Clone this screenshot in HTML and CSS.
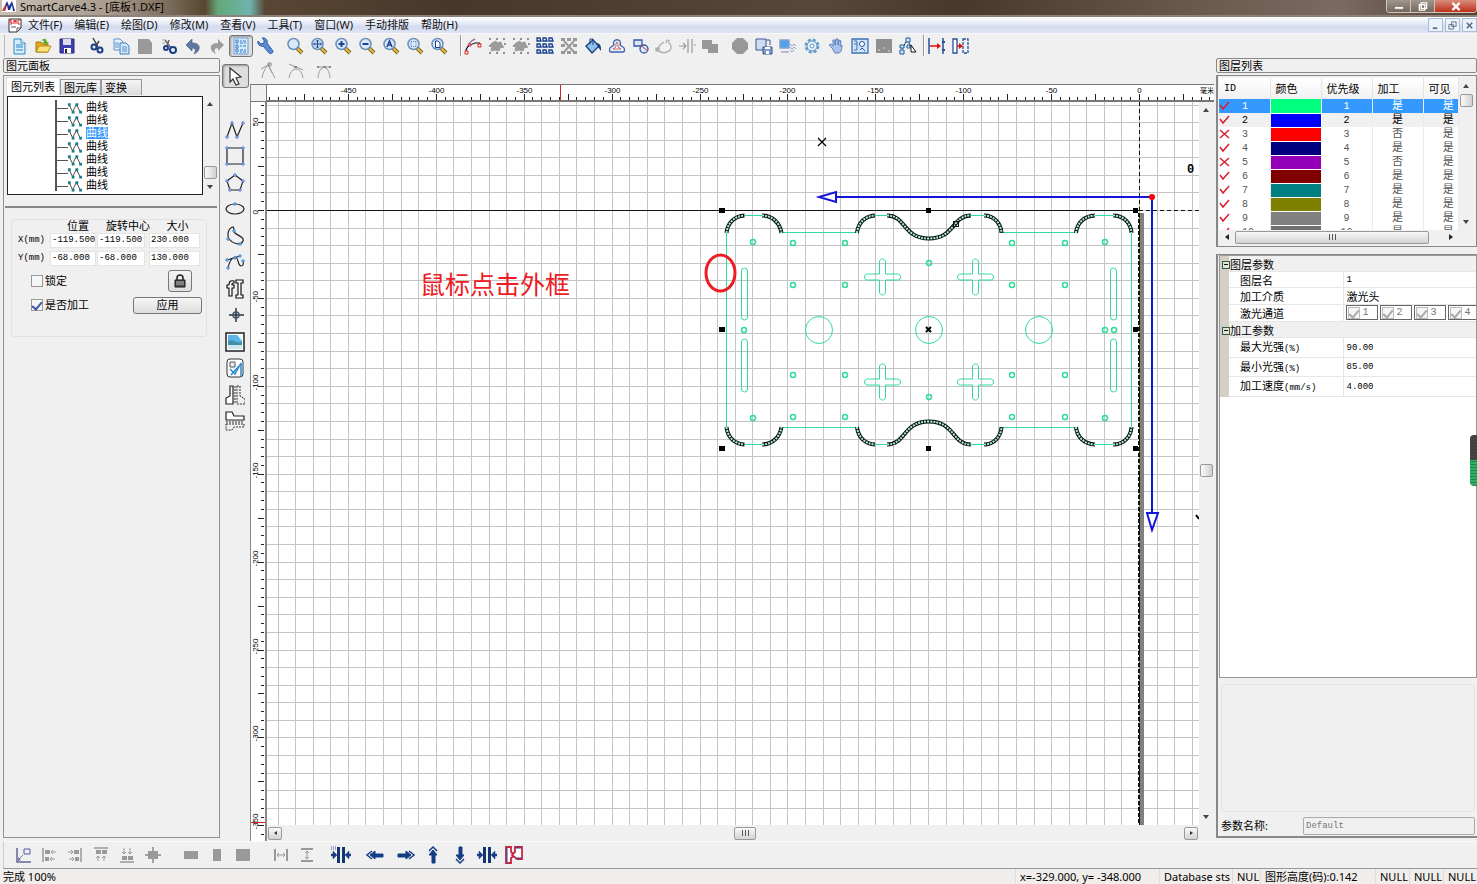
FILE: index.html
```html
<!DOCTYPE html>
<html lang="zh-CN">

<head>
    <meta charset="UTF-8">
    <meta name="viewport" content="width=device-width, initial-scale=1.0">
    <title>SmartCarve4.3 - [底板1.DXF]</title>
    <link rel="stylesheet" href="styles.css">
</head>

<body>
    <!-- Shared icon shapes -->
    <svg class="defs" width="0" height="0">
        <symbol id="lens" viewBox="0 0 18 18">
            <path d="M11 11l5 5" stroke="#7a6a2a" stroke-width="4" />
            <path d="M11 11l5 5" stroke="#e8b93c" stroke-width="2" />
            <circle cx="7.500" cy="7" r="5.500" fill="#d8e9f9" stroke="#6b8fb5" stroke-width="1.500" />
        </symbol>
        <symbol id="blob" viewBox="0 0 18 18">
            <path d="M4 6l4-2 1 2 4-1 1 3 2 2-4 1-1 3-4-1-4 1 1-4-3-1z" fill="#9b9b9b" stroke="#9b9b9b" />
            <path d="M1 1h2v2H1zM8 1h2v2H8zM15 1h2v2h-2zM1 15h2v2H1zM8 15h2v2H8zM15 15h2v2h-2zM1 8h1v2H1zM16 6h2v2h-2z" fill="#8f8f8f" />
        </symbol>
        <symbol id="poly" viewBox="0 0 16 12">
            <path d="M2 2l4 8 4-8 4 8" fill="none" stroke="#444" />
            <path d="M1 1h3v3H1zM5 9h3v3H5zM9 1h3v3H9zM13 9h3v3h-3z" fill="#1f7f86" />
        </symbol>
        <symbol id="squeeze" viewBox="0 0 20 18">
            <path d="M6 1h3v16H6zM11 1h3v16h-3z" fill="#14366f" />
            <path d="M0 8h2V5l4 4-4 4v-3H0zM20 8h-2V5l-4 4 4 4v-3h2z" fill="#1a3f88" stroke="#1a3f88" stroke-width=".5" />
        </symbol>
    </svg>

    <header class="titlebar">
        <svg class="logo" viewBox="0 0 14 12"><path d="M0 0h14v12H0z" fill="#fff" /><path d="M1 11L5 1l2 5 3-5 3 10h-2L10 5 8 10H6L5 5 3 11z" fill="#1d2f8f" /><path d="M0 11L4 3l-1 8z" fill="#d32" /></svg>
        <span class="caption">SmartCarve4.3 - [底板1.DXF]</span>
        <div class="winbtns">
            <button aria-label="最小化"><svg viewBox="0 0 12 10"><path d="M1 5h10v3H1z" fill="#fff" stroke="#444" stroke-width=".5" /></svg></button>
            <button aria-label="还原"><svg viewBox="0 0 12 10"><path d="M4 1h6v6H4zM2 3h6v6H2z" fill="#776a60" stroke="#fff" stroke-width="1.500" /></svg></button>
            <button class="close" aria-label="关闭"><svg viewBox="0 0 12 10"><path d="M2 1l8 8M10 1L2 9" stroke="#fff" stroke-width="2.500" /></svg></button>
        </div>
    </header>

    <nav class="menubar">
        <svg class="doc" viewBox="0 0 14 15"><path d="M1 1h12v9l-4 4H1z" fill="#fff" stroke="#333" /><path d="M4 2H2v2h2v2H2M6 6V2l1 2 1-2v4M12 2h-2v4h2" stroke="#d22" fill="none" /><path d="M3 9h5M9 14v-4h4" stroke="#555" fill="none" /></svg>
        <a href="#">文件(F)</a>
        <a href="#">编辑(E)</a>
        <a href="#">绘图(D)</a>
        <a href="#">修改(M)</a>
        <a href="#">查看(V)</a>
        <a href="#">工具(T)</a>
        <a href="#">窗口(W)</a>
        <a href="#">手动排版</a>
        <a href="#">帮助(H)</a>
        <div class="mdibtns">
            <button aria-label="最小化子窗口"><svg viewBox="0 0 10 10"><path d="M2 7h5v2H2z" fill="#5d6e82" /></svg></button>
            <button aria-label="还原子窗口"><svg viewBox="0 0 10 10"><path d="M4 1h5v5H4zM1 4h5v5H1z" fill="#e8f0fa" stroke="#5d6e82" /></svg></button>
            <button aria-label="关闭子窗口"><svg viewBox="0 0 10 10"><path d="M2 2l6 6M8 2L2 8" stroke="#5d6e82" stroke-width="1.800" /></svg></button>
        </div>
    </nav>

    <div class="toolbar">
        <div class="group first">
            <button aria-label="新建"><svg viewBox="0 0 18 18"><path d="M4 2h7l4 4v11H4z" fill="#d4ecfb" stroke="#2f8cc5" /><path d="M6 8h7M6 10h7M6 13h7" stroke="#2f8cc5" /><path d="M11 2v4h4" fill="#fff" stroke="#2f8cc5" /></svg></button>
            <button aria-label="打开"><svg viewBox="0 0 18 18"><path d="M2 15V5h5l1 2h6v8z" fill="#e9a91c" stroke="#a9790e" /><path d="M2 15l3-6h12l-3 6z" fill="#fbe37a" stroke="#b58a1c" /><path d="M7 4c3-4 6-2 6 1h2l-3 3-4-3h2c0-1-1-2-3-1z" fill="#5fae2e" /></svg></button>
            <button aria-label="保存"><svg viewBox="0 0 18 18"><path d="M2 2h14v14H2z" fill="#3e3fae" stroke="#26267c" /><path d="M5 2h8v6H5z" fill="#dde" /><path d="M6 11h7v5H6z" fill="#fff" /><path d="M7 12h2v4H7z" fill="#223" /></svg></button>
        </div>
        <div class="group">
            <button aria-label="剪切"><svg viewBox="0 0 18 18"><path d="M5 1l5 9M11 4L8 9" stroke="#444" stroke-width="1.500" /><circle cx="6" cy="10" r="2.500" fill="none" stroke="#1c3e86" stroke-width="2" /><circle cx="12" cy="13" r="2.500" fill="none" stroke="#1c3e86" stroke-width="2" /></svg></button>
            <button aria-label="复制"><svg viewBox="0 0 18 18"><path d="M2 2h6l3 3v8H2z" fill="#e7f2fc" stroke="#5b94c9" /><path d="M8 6h6l3 3v8H8z" fill="#d3e8fa" stroke="#3c7ebd" /><path d="M3 6h4M3 8h4M3 10h4M10 10h5M10 12h5M10 14h5" stroke="#5b94c9" /></svg></button>
            <button aria-label="粘贴" disabled><svg viewBox="0 0 18 18"><path d="M2 2h11l3 4v11H2z" fill="#999" /></svg></button>
            <button aria-label="裁剪"><svg viewBox="0 0 18 18"><path d="M5 3l6 8M9 3L7 9" stroke="#666" stroke-width="1.500" /><path d="M2 3h3M2 6h3" stroke="#aaa" /><circle cx="6" cy="11" r="2" fill="none" stroke="#1c3e86" stroke-width="2" /><circle cx="13" cy="13" r="3" fill="none" stroke="#1c3e86" stroke-width="2" /></svg></button>
            <button aria-label="撤销"><svg viewBox="0 0 18 18"><path d="M2 8l6-6v4c6 0 8 3 7 6-1 3-3 4-5 5 2-3 2-6-2-6v3z" fill="#5f789f" stroke="#4a628a" stroke-width=".7" /></svg></button>
            <button aria-label="重做"><svg viewBox="0 0 18 18"><path d="M16 8l-6-6v4C4 6 2 9 3 12c1 3 3 4 5 5-2-3-2-6 2-6v3z" fill="#9c9c9c" /></svg></button>
            <button class="on" aria-label="图元面板"><svg viewBox="0 0 18 18"><path d="M2 1h14v16H2z" fill="#d4e8fb" stroke="#6aa1d8" /><path d="M4 3h2v3H4zM4 8h2v3H4zM4 12h2v3H4z" fill="#fff" stroke="#3a79bf" /><path d="M8 4h2m1 0h3M8 6h3m1 0h2M8 9h2m1 0h3M8 13h3m1 0h2M8 15h2m1 0h3" stroke="#3a79bf" /></svg></button>
            <button aria-label="设置"><svg viewBox="0 0 18 18"><path d="M2 4l3 3 3-1V3L6 1c4-1 6 3 5 5l6 8c0 3-3 3-4 2L7 9C4 10 1 7 2 4z" fill="#5a8cd2" stroke="#2d62aa" /></svg></button>
        </div>
        <div class="group">
            <button aria-label="缩放"><svg viewBox="0 0 18 18"><use href="#lens" /></svg></button>
            <button aria-label="平移缩放"><svg viewBox="0 0 18 18"><use href="#lens" /><path d="M7.500 3v8M3.500 7h8" fill="none" stroke="#1d3f94" /><path d="M6 4.500L7.500 3 9 4.500M6 9.500L7.500 11 9 9.500M5 5.500L3.500 7 5 8.500M10 5.500L11.500 7 10 8.500" fill="none" stroke="#1d3f94" /></svg></button>
            <button aria-label="放大"><svg viewBox="0 0 18 18"><use href="#lens" /><path d="M7.500 4v6M4.500 7h6" stroke="#1d3f94" stroke-width="2" /></svg></button>
            <button aria-label="缩小"><svg viewBox="0 0 18 18"><use href="#lens" /><path d="M4.500 7h6" stroke="#1d3f94" stroke-width="2" /></svg></button>
            <button aria-label="全部显示"><svg viewBox="0 0 18 18"><use href="#lens" /><path d="M5 10l2.500-6L10 10M6 8h3" fill="none" stroke="#1d3f94" stroke-width="1.500" /></svg></button>
            <button aria-label="选择显示"><svg viewBox="0 0 18 18"><use href="#lens" /><path d="M5 4.500h5v5H5z" fill="none" stroke="#4d79c0" stroke-dasharray="1 1" /></svg></button>
            <button aria-label="页面显示"><svg viewBox="0 0 18 18"><use href="#lens" /><path d="M5.500 4H8l2 2v4.500H5.500z" fill="#fff" stroke="#1d3f94" /></svg></button>
        </div>
        <i class="sep"></i>
        <div class="group tight">
            <button aria-label="节点编辑"><svg viewBox="0 0 18 18"><path d="M2 15C3 8 6 4 11 2" fill="none" stroke="#97a" stroke-width="1.500" /><path d="M2 15v-3l4-4 5-2h5v3" fill="none" stroke="#111" /><path d="M1 14h3v3H1zM14 7h3v3h-3zM5 7h2v2H5z" fill="#fff" stroke="#d22" /></svg></button>
            <button aria-label="组合" disabled><svg viewBox="0 0 18 18"><use href="#blob" /></svg></button>
            <button aria-label="取消组合" disabled><svg viewBox="0 0 18 18"><use href="#blob" /></svg></button>
            <button aria-label="阵列"><svg viewBox="0 0 18 18"><path d="M1 1h3l1 3H1zM7 1h3l1 3H7zM13 1h3l1 3h-4zM1 7h3l1 3H1zM7 7h3l1 3H7zM13 7h3l1 3h-4zM1 13h3l1 3H1zM7 13h3l1 3H7zM13 13h3l1 3h-4z" fill="#dcebfb" stroke="#173f8a" stroke-width="1.300" /></svg></button>
            <button aria-label="取消阵列" disabled><svg viewBox="0 0 18 18"><path d="M1 1h4v3H1zM7 1h4v3H7zM13 1h4v3h-4zM1 7h4v3H1zM13 7h4v3h-4zM1 14h4v3H1zM7 14h4v3H7zM13 14h4v3h-4z" fill="#989898" /><path d="M4 4l10 11M14 4L4 15" stroke="#989898" stroke-width="2" /></svg></button>
            <button aria-label="填充"><svg viewBox="0 0 18 18"><path d="M2 9l7-6 6 6-7 7z" fill="#8fc1ea" stroke="#17407e" stroke-width="1.300" /><path d="M6 7V2h3v6" fill="none" stroke="#17407e" /><path d="M12 6c5 0 5 4 5 8l-3-4z" fill="#17407e" /></svg></button>
            <button aria-label="印章"><svg viewBox="0 0 18 18"><path d="M6 8c-3-7 9-7 6 0l3 2c2 1 2 5 0 5H3c-2 0-2-4 0-5z" fill="#e8effa" stroke="#4262a6" stroke-width="1.300" /><path d="M5 12l3-2V7l1-2 1 2v3l3 2z" fill="#fff" stroke="#b44" stroke-width=".8" /></svg></button>
        </div>
        <div class="group narrow">
            <button aria-label="相交"><svg viewBox="0 0 18 18"><path d="M2 3h8v6H2z" fill="#dbe7f9" stroke="#3159a5" stroke-width="1.300" /><circle cx="12" cy="12" r="4" fill="#dce8fa" stroke="#3159a5" stroke-width="1.300" /><path d="M8 8l8 6" stroke="#b44" /></svg></button>
            <button aria-label="平滑" disabled><svg viewBox="0 0 18 18"><path d="M9 5L5 8l-3 5c6 5 15 2 14-4 0-2-2-3-3-4M1 11h3v3H1zM11 6l1-3 3 1" fill="none" stroke="#aaa" stroke-width="1.200" /></svg></button>
            <button aria-label="对齐" disabled><svg viewBox="0 0 18 18"><path d="M10 2v14M14 2v14M1 9h7M5 6l3 3-3 3M16 8h2" fill="none" stroke="#999" stroke-width="1.200" /></svg></button>
        </div>
        <div class="group tight">
            <button aria-label="合并" disabled><svg viewBox="0 0 18 18"><path d="M1 3h10v4h6v9H7v-4H1z" fill="#989898" /></svg></button>
        </div>
        <div class="group">
            <button aria-label="停止" disabled><svg viewBox="0 0 18 18"><path d="M6 1h6l5 5v6l-5 5H6l-5-5V6z" fill="#989898" /></svg></button>
            <button aria-label="输出"><svg viewBox="0 0 18 18"><path d="M1 2h10v11H1z" fill="#cfddf2" stroke="#3b568f" /><path d="M11 3h4v5" fill="none" stroke="#3b568f" /><path d="M8 10h9v7H8z" fill="#8299d0" stroke="#3b568f" /><path d="M10 10h5v2h-5zM11 14h3v3h-3z" fill="#fff" /></svg></button>
            <button aria-label="通讯"><svg viewBox="0 0 18 18"><path d="M1 3h9v8H1z" fill="#4da3ec" stroke="#8aa1cc" stroke-width="1.500" /><path d="M2 14h8v2H2z" fill="#c0b6dc" /><path d="M11 7l2 2 2-2 2 2M11 10l2 2 2-2 2 2M11 13l2 2 2-2" fill="none" stroke="#8aa6cc" /></svg></button>
            <button aria-label="参数"><svg viewBox="0 0 18 18"><circle cx="9" cy="9" r="6" fill="none" stroke="#6d9dcb" stroke-width="3" stroke-dasharray="3 1.700" /><circle cx="9" cy="9" r="5" fill="#e5f1fc" stroke="#5f93c6" /><circle cx="9" cy="9" r="2" fill="#fff" stroke="#5f93c6" /></svg></button>
            <button aria-label="手形"><svg viewBox="0 0 18 18"><path d="M5 11L2 8l2-1 2 2V3h2v5l1-6h2v6l1-5 2 1-1 5 2-1c0 5-1 8-4 8H8z" fill="#a8c3ed" stroke="#5c80bb" /></svg></button>
            <button aria-label="仿真"><svg viewBox="0 0 18 18"><path d="M1 2h16v14H1z" fill="#cfe4f8" stroke="#3d73b3" stroke-width="1.300" /><path d="M3 4h3v9H3M3 7h3" fill="none" stroke="#3d73b3" /><circle cx="11" cy="7" r="2.500" fill="#fff" stroke="#22559a" /><path d="M9 13l2-2 3 3" fill="none" stroke="#22559a" /></svg></button>
            <button aria-label="图像" disabled><svg viewBox="0 0 18 18"><path d="M1 2h16v14H1z" fill="#8f8f8f" /><path d="M3 13h2M8 11h2M13 14h2" stroke="#ddd" /></svg></button>
            <button aria-label="排序"><svg viewBox="0 0 18 18"><path d="M3 12L8 3l4 6 3 6M8 3l3-2" fill="none" stroke="#245" /><path d="M1 13h4v4H1zM1 8h4v3H1zM7 1h4v4H7zM8 8h3v3H8z" fill="#d5eafc" stroke="#16589e" /><path d="M12 8l5 7h-5z" fill="#fff" stroke="#111" /></svg></button>
        </div>
        <i class="sep close-in"></i>
        <div class="group tight">
            <button aria-label="间距"><svg viewBox="0 0 18 18"><path d="M2 1v16M16 1v16" stroke="#2a4f96" stroke-width="1.500" /><path d="M15 4h3v2h-3zM15 12h3v2h-3z" fill="#2a4f96" /><path d="M3 9h9" stroke="#d11" stroke-width="1.500" /><path d="M10 6l4 3-4 3z" fill="#d11" /></svg></button>
            <button aria-label="移动"><svg viewBox="0 0 18 18"><path d="M2 2h4v14H2z" fill="#fff" stroke="#2a4f96" stroke-width="1.300" /><path d="M12 2h5v14h-5z" fill="none" stroke="#2a4f96" stroke-dasharray="3 1" stroke-width="1.300" /><path d="M6 9h3" stroke="#d11" stroke-width="1.500" /><path d="M8 6l4 3-4 3z" fill="#d11" /></svg></button>
        </div>
    </div>

    <main class="workspace">
        <aside class="left">
            <h2 class="panel-title">图元面板</h2>
            <div class="panel">
                <div class="tabs">
                    <button class="tab active">图元列表</button>
                    <button class="tab">图元库</button>
                    <button class="tab">变换</button>
                </div>
                <div class="treebox">
                    <ul class="tree">
                        <li><svg viewBox="0 0 16 12"><use href="#poly" /></svg><span>曲线</span></li>
                        <li><svg viewBox="0 0 16 12"><use href="#poly" /></svg><span>曲线</span></li>
                        <li><svg viewBox="0 0 16 12"><use href="#poly" /></svg><span class="sel">曲线</span></li>
                        <li><svg viewBox="0 0 16 12"><use href="#poly" /></svg><span>曲线</span></li>
                        <li><svg viewBox="0 0 16 12"><use href="#poly" /></svg><span>曲线</span></li>
                        <li><svg viewBox="0 0 16 12"><use href="#poly" /></svg><span>曲线</span></li>
                        <li><svg viewBox="0 0 16 12"><use href="#poly" /></svg><span>曲线</span></li>
                    </ul>
                    <div class="vscroll tree-scroll"><i class="up"></i><i class="space"></i><i class="thumb"></i><i class="down"></i></div>
                </div>
                <hr>
                <form class="props">
                    <div class="coords">
                        <span></span><span>位置</span><span>旋转中心</span><span>大小</span>
                        <label for="x">X(mm)</label>
                        <input id="x" value="-119.500"><input aria-label="X 旋转中心" value="-119.500"><input class="size" aria-label="X 大小" value="230.000">
                        <label for="y">Y(mm)</label>
                        <input id="y" value="-68.000"><input aria-label="Y 旋转中心" value="-68.000"><input class="size" aria-label="Y 大小" value="130.000">
                    </div>
                    <div class="line">
                        <label><input type="checkbox">锁定</label>
                        <button type="button" class="lock" aria-label="锁"><svg viewBox="0 0 14 14"><path d="M4 7V4c0-4 6-4 6 0v3" fill="none" stroke="#222" stroke-width="1.500" /><path d="M2 6h10v7H2z" fill="#555" stroke="#111" /><path d="M3 8h8M3 10h8" stroke="#aaa" /></svg></button>
                    </div>
                    <div class="line">
                        <label><input type="checkbox" checked>是否加工</label>
                        <button type="button" class="apply">应用</button>
                    </div>
                </form>
            </div>
        </aside>

        <div class="toolstrip">
            <button class="on" aria-label="选择"><svg viewBox="0 0 20 20"><path d="M5 2l11 9-5 1 3 6-3 1-3-6-3 3z" fill="#fff" stroke="#333" stroke-width="1.200" /></svg></button>
            <div class="shapes">
                <button aria-label="折线"><svg viewBox="0 0 20 20"><path d="M2 17L7 3l5 14 6-14" fill="none" stroke="#222" stroke-width="1.200" /><path d="M1 16h2v2H1zM6 2h2v2H6zM11 16h2v2h-2zM17 2h2v2h-2z" fill="#fff" stroke="#4f72d0" /></svg></button>
                <button aria-label="矩形"><svg viewBox="0 0 20 20"><path d="M2 2h16v16H2z" fill="none" stroke="#222" stroke-width="1.200" /><path d="M1 1h2v2H1zM17 1h2v2h-2zM1 17h2v2H1zM17 17h2v2h-2z" fill="#fff" stroke="#4f72d0" /></svg></button>
                <button aria-label="多边形"><svg viewBox="0 0 20 20"><path d="M10 2l8 6-3 9H5L2 8z" fill="none" stroke="#222" stroke-width="1.200" /><path d="M9 1h2v2H9zM17 7h2v2h-2zM14 16h2v2h-2zM4 16h2v2H4zM1 7h2v2H1z" fill="#fff" stroke="#4f72d0" /></svg></button>
                <button aria-label="椭圆"><svg viewBox="0 0 20 20"><ellipse cx="10" cy="10" rx="9" ry="5" fill="none" stroke="#222" stroke-width="1.200" /><path d="M9 4h2v2H9z" fill="#fff" stroke="#2b82d0" /></svg></button>
                <button aria-label="闭合曲线"><svg viewBox="0 0 20 20"><path d="M8 1C3 2 2 9 4 13c4 5 12 7 14 2 2-4-5-5-8-8-2-2 0-4-2-6z" fill="none" stroke="#222" stroke-width="1.200" /><path d="M8 4h2v2H8zM2 12h2v2H2zM14 17h2v2h-2z" fill="#fff" stroke="#2b82d0" /></svg></button>
                <button aria-label="贝塞尔"><svg viewBox="0 0 20 20"><path d="M3 16C4 11 6 6 10 5c4 0 2 8 6 9 2 0 3-2 2-5M2 8l13-4" fill="none" stroke="#222" stroke-width="1.200" /><path d="M2 15h2v2H2zM1 7h2v2H1zM9 5h2v2H9zM14 3h2v2h-2zM17 8h2v2h-2z" fill="#fff" stroke="#2b82d0" /></svg></button>
                <button aria-label="文字"><svg viewBox="0 0 20 20"><path d="M9 2C5 1 4 3 4 6H2v3h2v8h3V9h2V6H7c0-2 0-2 2-2zM11 1h7v3h-2v12h2v3h-7v-3h2V4h-2z" fill="#fff" stroke="#111" stroke-width="1.200" /></svg></button>
                <button aria-label="定位点"><svg viewBox="0 0 20 20"><path d="M11 3v14M4 10h15" stroke="#234" stroke-width="1.500" /><circle cx="11" cy="10" r="3" fill="none" stroke="#456" stroke-width="1.500" /></svg></button>
                <button aria-label="图片"><svg viewBox="0 0 20 20"><path d="M1 1h18v18H1z" fill="#fff" stroke="#222" stroke-width="1.500" /><path d="M3 3h14v8H3z" fill="#5bb4e8" /><path d="M3 9c5-3 8 3 14 1v7H3z" fill="#3f8fa8" /><path d="M3 13h14v4H3z" fill="#cfe8ec" /><path d="M12 3h5v6z" fill="#e8f7fb" /></svg></button>
                <button aria-label="对象"><svg viewBox="0 0 20 20"><rect x="2" y="1" width="16" height="18" rx="3" fill="#fff" stroke="#333" /><path d="M5 4h5v5H5z" fill="#eee" stroke="#555" /><path d="M5 11l5 5 6-11v13M6 17l8-9" fill="none" stroke="#2a8bd2" stroke-width="1.500" /></svg></button>
                <button aria-label="水平镜像"><svg viewBox="0 0 20 20"><path d="M8 1v18H1v-6l4-2V1z" fill="#fff" stroke="#222" stroke-width="1.200" /><path d="M10 1v18M12 1h3v10l5 3v5h-8z" fill="none" stroke="#333" stroke-dasharray="2 1" /></svg></button>
                <button aria-label="垂直镜像"><svg viewBox="0 0 20 20"><path d="M1 1h6l2 4h10v4H1z" fill="#fff" stroke="#222" stroke-width="1.200" /><path d="M1 11h18M1 13h18v3H9l-2 3H1z" fill="none" stroke="#333" stroke-dasharray="2 1" /></svg></button>
            </div>
        </div>

        <section class="editor">
            <div class="nodebar">
                <button aria-label="尖角节点" disabled><svg viewBox="0 0 18 18"><path d="M3 16C4 10 7 5 9 3c2 3 4 7 7 13M2 7l9-5M9 3l4 8" fill="none" stroke="#999" /><path d="M9 1h3v3H9z" fill="none" stroke="#888" /></svg></button>
                <button aria-label="平滑节点" disabled><svg viewBox="0 0 18 18"><path d="M2 16c2-12 12-12 14 0M2 2l14 6" fill="none" stroke="#999" /><path d="M7 4h3v2H7z" fill="#888" /></svg></button>
                <button aria-label="对称节点" disabled><svg viewBox="0 0 18 18"><path d="M3 16C4 2 14 2 15 16M2 5h14" fill="none" stroke="#999" /><path d="M2 4h2v2H2zM8 4h3v2H8zM14 4h2v2h-2z" fill="#888" /></svg></button>
            </div>
            <div class="sheet">
                <div class="corner"></div>
                <svg class="ruler-x" id="rulerX"></svg>
                <svg class="ruler-y" id="rulerY"></svg>
                <svg class="drawing" id="drawing">
                    <g id="grid" class="grid"></g>
                    <g transform="translate(-267 -102)">
                        <!-- Page edge and axes -->
                        <rect x="1139" y="213" width="5" height="1200" fill="#808080" />
                        <path class="axis" d="M267 210.500h872" />
                        <path class="axis" d="M1139 210.500h300" stroke-dasharray="4 3" />
                        <path class="axis" d="M1139.500 102v1300" stroke-dasharray="4 3" />
                        <path class="axis heavy" d="M1139 213v1200" stroke-dasharray="4 2" />

                        <!-- Plate outline -->
                        <g class="cut">
                            <path d="M726.500 232v195M1131.500 232v195" />
                            <g id="edge">
                                <path d="M744 215.500h18M781 232.500h76M874 215.500h13M971 215.500h13M1001 232.500h75M1095 215.500h18" />
                                <path class="node" d="M726.500 233c1-10 8-17 18-17.500M762 215.500c11 0 18 8 19.500 17.500M857 233c1-10 8-17 18-17.500M887 215.500c19 0 16 23 42 23s23-23 42-23M984 215.500c10 0 17 8 17.500 17.500M1076 233c1-10 8-17 19-17.500M1113 215.500c11 0 18 8 18.500 17.500" />
                                <path class="node-in" d="M726.500 233c1-10 8-17 18-17.500M762 215.500c11 0 18 8 19.500 17.500M857 233c1-10 8-17 18-17.500M887 215.500c19 0 16 23 42 23s23-23 42-23M984 215.500c10 0 17 8 17.500 17.500M1076 233c1-10 8-17 19-17.500M1113 215.500c11 0 18 8 18.500 17.500" />
                            </g>
                            <use href="#edge" transform="matrix(1 0 0 -1 0 660)" />
                        </g>
                        <rect x="953.500" y="221.500" width="5" height="5" fill="none" stroke="#111" />

                        <!-- Slots, crosses and round holes -->
                        <g class="cut">
                            <rect x="741.500" y="268" width="6" height="52" rx="3" />
                            <rect x="741.500" y="339" width="6" height="53" rx="3" />
                            <rect x="1110.500" y="268" width="6" height="52" rx="3" />
                            <rect x="1110.500" y="339" width="6" height="53" rx="3" />
                            <path id="cross" d="M879.500 274v-12c0-4 6-4 6 0v12h12c4 0 4 6 0 6h-12v12c0 4-6 4-6 0v-12h-12c-4 0-4-6 0-6z" />
                            <use href="#cross" x="93" />
                            <use href="#cross" y="105" />
                            <use href="#cross" x="93" y="105" />
                            <circle cx="819" cy="330" r="13.500" />
                            <circle cx="929" cy="330" r="13.500" />
                            <circle cx="1039" cy="330" r="13.500" />
                        </g>
                        <g class="cut hole" id="holes"></g>

                        <!-- Selection handles -->
                        <path d="M719 208h6v5h-6zM926 208h5v5h-5zM1133 208h5v5h-5zM719 327h6v5h-6zM1133 327h5v5h-5zM719 446h6v5h-6zM926 446h5v5h-5zM1133 446h5v5h-5z" />
                        <path d="M926 327l5 5M931 327l-5 5" stroke="#000" stroke-width="2" />
                        <path d="M818 138l8 8M826 138l-8 8" stroke="#000" stroke-width="1.200" />
                        <path d="M1196 515l3 4" stroke="#000" stroke-width="2" />

                        <!-- Machine origin -->
                        <path class="travel" d="M836 197h316v316" />
                        <path class="travel head" d="M819 197l17-5v10zM1147 513h11l-6 17z" />
                        <circle cx="1152" cy="197" r="3" fill="#f00" />
                        <text class="zero" x="1187" y="173">0</text>

                        <ellipse class="mark" cx="720.500" cy="273" rx="14.500" ry="18" />
                        <text class="note" x="420" y="294">鼠标点击外框</text>
                    </g>
                </svg>
                <div class="vscroll"><i class="up"></i><i class="space"></i><i class="thumb"></i><i class="space"></i><i class="down"></i></div>
                <div class="hscroll"><i class="btn prev"></i><i class="btn grip"></i><i class="btn next"></i></div>
            </div>
        </section>

        <aside class="right">
            <h2 class="panel-title">图层列表</h2>
            <div class="layers">
                <div class="layer-view">
                    <table class="layer-table">
                        <thead>
                            <tr><th>ID</th><th>颜色</th><th>优先级</th><th>加工</th><th>可见</th></tr>
                        </thead>
                        <tbody id="layerRows"></tbody>
                    </table>
                </div>
                <div class="vscroll"><i class="up"></i><i class="thumb"></i><i class="space"></i><i class="down"></i></div>
                <div class="hbar"><i class="prev"></i><i class="long"></i><i class="next"></i></div>
            </div>
            <div class="param-panel">
                <div class="params">
                    <table class="param-table">
                        <colgroup><col class="c-margin"><col class="c-name"><col></colgroup>
                        <tr class="head"><th></th><th colspan="2"><i class="minus"></i>图层参数</th></tr>
                        <tr><th></th><td>图层名</td><td>1</td></tr>
                        <tr><th></th><td>加工介质</td><td class="word">激光头</td></tr>
                        <tr><th></th><td>激光通道</td><td class="channels">
                                <div>
                                    <label><input type="checkbox" checked disabled>1</label>
                                    <label><input type="checkbox" checked disabled>2</label>
                                    <label><input type="checkbox" checked disabled>3</label>
                                    <label><input type="checkbox" checked disabled>4</label>
                                </div>
                            </td></tr>
                        <tr class="head"><th></th><th colspan="2"><i class="minus"></i>加工参数</th></tr>
                        <tr><th></th><td>最大光强<small>(%)</small></td><td>90.00</td></tr>
                        <tr><th></th><td>最小光强<small>(%)</small></td><td>85.00</td></tr>
                        <tr><th></th><td>加工速度<small>(mm/s)</small></td><td>4.000</td></tr>
                    </table>
                </div>
                <div class="param-empty"></div>
                <div class="param-name">
                    <label for="pname">参数名称:</label>
                    <input id="pname" value="Default" disabled>
                </div>
            </div>
            <div class="side-meter"></div>
        </aside>
    </main>

    <div class="alignbar">
        <div class="group">
            <button aria-label="原点"><svg viewBox="0 0 18 18"><path d="M3 2v14h14" fill="none" stroke="#669" stroke-width="1.500" /><path d="M10 3h6v5h-6z" fill="none" stroke="#55a" /><path d="M5 13l4-4" stroke="#77a" /><path d="M4 11l3 3-3 1z" fill="#77a" /></svg></button>
            <button disabled aria-label="左对齐"><svg viewBox="0 0 18 18"><path d="M3 2v14" stroke="#999" stroke-width="1.500" /><path d="M5 4h5v4H5zM5 11h4v4H5z" fill="#999" /><path d="M11 6h5M13 4l-2 2 2 2M10 13h5M12 11l-2 2 2 2" fill="none" stroke="#999" /></svg></button>
            <button disabled aria-label="右对齐"><svg viewBox="0 0 18 18"><path d="M15 2v14" stroke="#999" stroke-width="1.500" /><path d="M8 4h5v4H8zM9 11h4v4H9z" fill="#999" /><path d="M2 6h5M5 4l2 2-2 2M3 13h5M6 11l2 2-2 2" fill="none" stroke="#999" /></svg></button>
            <button disabled aria-label="上对齐"><svg viewBox="0 0 18 18"><path d="M2 2h14" stroke="#999" stroke-width="1.500" /><path d="M4 4h5v4H4zM10 4h5v4h-5z" fill="#999" /><path d="M6 15v-5M4 12l2-2 2 2M12 15v-5M10 12l2-2 2 2" fill="none" stroke="#999" /></svg></button>
            <button disabled aria-label="下对齐"><svg viewBox="0 0 18 18"><path d="M2 16h14" stroke="#999" stroke-width="1.500" /><path d="M4 10h5v4H4zM10 10h5v4h-5z" fill="#999" /><path d="M6 2v6M4 6l2 2 2-2M12 2v6M10 6l2 2 2-2" fill="none" stroke="#999" /></svg></button>
            <button disabled aria-label="居中"><svg viewBox="0 0 18 18"><path d="M9 1v16M1 9h16" stroke="#888" stroke-width="1.500" /><path d="M4 5h10v8H4z" fill="#999" /></svg></button>
        </div>
        <div class="group gap">
            <button disabled aria-label="等宽"><svg viewBox="0 0 18 18"><path d="M2 5h14v8H2z" fill="#999" /></svg></button>
            <button disabled aria-label="等高"><svg viewBox="0 0 18 18"><path d="M5 3h8v12H5z" fill="#999" /></svg></button>
            <button disabled aria-label="等大小"><svg viewBox="0 0 18 18"><path d="M2 3h14v12H2z" fill="#999" /></svg></button>
        </div>
        <div class="group gap">
            <button disabled aria-label="水平间距"><svg viewBox="0 0 18 18"><path d="M3 3v12M15 3v12" stroke="#999" stroke-width="2" /><path d="M5 9h8M7 7L5 9l2 2M11 7l2 2-2 2" fill="none" stroke="#999" /></svg></button>
            <button disabled aria-label="垂直间距"><svg viewBox="0 0 18 18"><path d="M3 3h12M3 15h12" stroke="#999" stroke-width="2" /><path d="M9 5v8M7 7l2-2 2 2M7 11l2 2 2-2" fill="none" stroke="#999" /></svg></button>
        </div>
        <div class="group nudge">
            <button class="big" aria-label="靠拢"><svg viewBox="0 0 20 18"><path d="M0 1h5M0 3h5" stroke="#335a9a" stroke-dasharray="1 1" /><use href="#squeeze" /></svg></button>
            <button class="big" aria-label="左移"><svg viewBox="0 0 18 18"><path d="M4 9l5-4v3h8v3H9v2z" fill="#153d86" stroke="#153d86" /><path d="M6 5L1 9l5 4" fill="none" stroke="#153d86" stroke-width="1.500" /></svg></button>
            <button aria-label="右移"><svg viewBox="0 0 18 18"><path d="M14 9L9 5v3H1v3h8v2z" fill="#153d86" stroke="#153d86" /><path d="M12 5l5 4-5 4" fill="none" stroke="#153d86" stroke-width="1.500" /></svg></button>
            <button aria-label="上移"><svg viewBox="0 0 18 18"><path d="M9 4l4 5h-2v8H8V9H5z" fill="#153d86" stroke="#153d86" /><path d="M5 5l4-4 4 4" fill="none" stroke="#153d86" stroke-width="1.500" /></svg></button>
            <button aria-label="下移"><svg viewBox="0 0 18 18"><path d="M9 14l4-5h-2V1H8v8H5z" fill="#153d86" stroke="#153d86" /><path d="M5 13l4 4 4-4" fill="none" stroke="#153d86" stroke-width="1.500" /></svg></button>
            <button aria-label="合拢"><svg viewBox="0 0 20 18"><use href="#squeeze" /></svg></button>
            <button aria-label="拼接"><svg viewBox="0 0 20 18"><path d="M2 1h5v5l4 3-4 3v5H2z" fill="#fff" stroke="#c22742" stroke-width="1.800" /><path d="M11 1h7v12h-5L8 9l3-3z" fill="#fff" stroke="#c22742" stroke-width="1.800" /><path d="M3 2v14M12 2h5M17 12h-4" stroke="#249" /></svg></button>
        </div>
    </div>

    <footer class="statusbar">
        <span class="ready">完成 100%</span>
        <span class="pos">x=-329.000, y= -348.000</span>
        <span class="db">Database sts</span>
        <span class="cut-off">NULL</span>
        <span class="height">图形高度(码):0.142</span>
        <span>NULL</span>
        <span>NULL</span>
        <span>NULL</span>
    </footer>
    <script src="script.js"></script>
</body>

</html>
```
FILE: styles.css
```css
* {
    box-sizing: border-box;
}

body {
    margin: 0;
    height: 100vh;
    display: flex;
    flex-direction: column;
    overflow: hidden;
    background: #f0f0f0;
    color: #000;
    font: 11px/14px "Noto Sans", "Noto Sans CJK SC", sans-serif;
}

button,
input {
    font: inherit;
    color: inherit;
    padding: 0;
    margin: 0;
}

button {
    border: 0;
    background: none;
    display: flex;
    align-items: center;
    justify-content: center;
}

svg {
    display: block;
    flex: none;
}

.defs {
    position: absolute;
}

/* Title bar */
.titlebar {
    height: 17px;
    flex: none;
    display: flex;
    align-items: flex-start;
    gap: 4px;
    padding-left: 2px;
    border-bottom: 2px solid #8c8279;
    background: linear-gradient(90deg, #c9bfb2 0, #a99c8d 110px, #7b6b5a 170px, #57452f 205px, #63a878 218px, #6fb4ad 250px, #5a4634 265px, #47372a 450px, #57463a 820px, #48372a 960px, #6a584b 1190px, #7a6a60 1340px, #50402f 100%);
}

.logo {
    width: 14px;
    height: 12px;
}

.caption {
    flex: 1;
}

.winbtns {
    display: flex;
    height: 13px;
    border: 1px solid #d0c8c0;
    border-top: 0;
    border-radius: 0 0 4px 4px;
    overflow: hidden;
}

.winbtns button {
    width: 24px;
    background: linear-gradient(#a1968d, #75675b);
    border-right: 1px solid #cbc2ba;
}

.winbtns .close {
    width: 41px;
    border: 0;
    background: linear-gradient(#d98d7c, #bd2f19);
}

.winbtns svg {
    width: 12px;
    height: 9px;
}

/* Menu */
.menubar {
    height: 16px;
    flex: none;
    display: flex;
    align-items: center;
    gap: 12px;
    padding-left: 8px;
    background: linear-gradient(#fff, #e6ebf7 40%, #d5dcef 60%, #dde3f4);
}

.menubar a {
    color: #111;
    text-decoration: none;
}

.menubar .doc {
    width: 14px;
    height: 15px;
    margin-right: -6px;
}

.mdibtns {
    display: flex;
    gap: 2px;
    height: 14px;
    margin-left: auto;
}

.mdibtns button {
    width: 15px;
    border: 1px solid #a9bdd6;
    background: #eaf2fb;
}

.mdibtns svg {
    width: 9px;
    height: 9px;
}

/* Tool bars */
.toolbar {
    height: 24px;
    flex: none;
    display: flex;
    align-items: center;
    padding-left: 4px;
    border-top: 1px solid #f8f8f8;
}

.group {
    display: flex;
    margin-left: 6px;
}

.group.first {
    margin-left: 0;
    padding-left: 2px;
    border-left: 1px solid #bbb;
}

.group.tight,
.group.narrow {
    margin-left: 0;
}

.group button {
    width: 24px;
    height: 22px;
}

.group.narrow button {
    width: 23px;
}

.group svg {
    width: 18px;
    height: 18px;
}

button.on {
    border: 1px solid #777;
    border-radius: 3px;
    background: #dedede;
    box-shadow: inset 1px 1px 2px #999;
}

.sep {
    width: 2px;
    height: 21px;
    margin: 0 -1px 0 9px;
    border-left: 1px solid #999;
    border-right: 1px solid #fff;
}

.sep.close-in {
    margin-left: 3px;
}

.workspace {
    flex: 1;
    min-height: 0;
    display: flex;
}

/* Side panels */
.left {
    width: 217px;
    margin: 1px 0 3px 3px;
    flex: none;
    display: flex;
    flex-direction: column;
    gap: 2px;
}

.panel-title {
    margin: 0;
    height: 15px;
    padding-left: 2px;
    border: 1px solid #888;
    border-radius: 2px;
    font-size: 11px;
    font-weight: normal;
    line-height: 13px;
}

.panel {
    flex: 1;
    border: 1px solid #909090;
    padding: 1px 2px;
}

.tabs {
    display: flex;
    align-items: flex-end;
    height: 18px;
}

.tab {
    height: 16px;
    width: 41px;
    border: 1px solid #999;
    border-bottom: 0;
    background: linear-gradient(#f4f4f4, #ddd);
    justify-content: flex-start;
    padding-left: 3px;
}

.tab.active {
    width: 54px;
    height: 18px;
    border-color: #ddd;
    background: #fff;
    padding-left: 4px;
}

.treebox {
    display: flex;
    height: 99px;
    margin: 1px 0 0 1px;
}

.tree {
    list-style: none;
    margin: 0;
    padding: 3px 0 0 47px;
    width: 196px;
    border: 1px solid #222;
    background: #fff;
}

.tree li {
    display: flex;
    align-items: center;
    height: 13px;
    padding-left: 10px;
    border-left: 2px solid #555;
    background: linear-gradient(#555, #555) 0 8px / 11px 1px no-repeat;
}

.tree svg {
    width: 15px;
    height: 12px;
    margin: 2px 4px 0 0;
}

.tree span {
    line-height: 12px;
}

.tree .sel {
    background: #3399ff;
    color: #fff;
}

hr {
    margin: 11px 0 11px -1px;
    border: 0;
    height: 2px;
    background: #888;
}

.props {
    width: 196px;
    margin-left: 5px;
    height: 118px;
    border: 1px solid #e2e2e2;
    border-radius: 3px;
    padding: 0 3px 0 6px;
}

.coords {
    display: grid;
    grid-template-columns: 32px 47px 49px 54px;
    grid-template-rows: 11px 18px 18px;
    align-items: center;
    text-align: center;
}

.coords span {
    padding-left: 9px;
    white-space: nowrap;
    line-height: 11px;
}

.coords label,
.coords input {
    font: 9px/13px "Liberation Mono", monospace;
    text-align: left;
}

.coords input {
    height: 15px;
    width: calc(100% - 1px);
    padding-left: 1px;
    border: 1px solid #e4e4e4;
    background: #fff;
}

.coords .size {
    width: 51px;
    justify-self: end;
}

.line {
    display: flex;
    align-items: center;
    justify-content: space-between;
    height: 24px;
    padding: 0 1px 0 13px;
    margin-top: 2px;
}

.line + .line {
    margin-top: 0;
}

.line label {
    display: flex;
    align-items: center;
    gap: 2px;
}

input[type="checkbox"] {
    appearance: none;
    width: 12px;
    height: 12px;
    border: 1px solid #999;
    background: #f6f6f6;
    display: grid;
    place-items: center;
}

input[type="checkbox"]:checked::before {
    content: "";
    width: 4px;
    height: 8px;
    border: solid #3c56a8;
    border-width: 0 2px 2px 0;
    rotate: 40deg;
}

.lock,
.apply {
    border: 1px solid #777;
    border-radius: 3px;
    background: linear-gradient(#f6f6f6, #ddd);
}

.lock {
    width: 24px;
    height: 22px;
    margin-right: 10px;
}

.lock svg {
    width: 14px;
    height: 14px;
}

.apply {
    width: 69px;
    height: 17px;
}

/* Scroll bars */
.vscroll {
    width: 14px;
    display: flex;
    flex-direction: column;
    align-items: center;
    padding: 6px 0;
    background: #f0f0f0;
}

.up,
.down,
.prev:not(.btn),
.next:not(.btn) {
    border: 3px solid transparent;
}

.up {
    border-top: 0;
    border-bottom: 4px solid #444;
}

.down {
    border-bottom: 0;
    border-top: 4px solid #444;
}

.space {
    flex: 1;
}

.thumb {
    width: 13px;
    height: 13px;
    border: 1px solid #999;
    border-radius: 2px;
    background: linear-gradient(90deg, #fafafa, #d0d0d0);
}

.tree-scroll .thumb {
    margin-bottom: 6px;
}

.sheet .thumb {
    margin-top: 14px;
}

.layers .thumb {
    margin-top: 6px;
}

/* Vertical tool strip */
.toolstrip {
    width: 30px;
    flex: none;
    display: flex;
    flex-direction: column;
    align-items: center;
    padding-top: 7px;
}

.toolstrip .on {
    width: 27px;
    height: 24px;
}

.shapes {
    height: 315px;
    margin-top: 30px;
    display: flex;
    flex-direction: column;
    justify-content: space-between;
}

.shapes button {
    width: 24px;
    height: 24px;
}

.toolstrip svg {
    width: 20px;
    height: 20px;
}

/* Drawing area */
.editor {
    flex: 1;
    min-width: 0;
    display: flex;
    flex-direction: column;
}

.nodebar {
    height: 27px;
    flex: none;
    display: flex;
    gap: 10px;
    padding: 4px 0 4px 9px;
}

.nodebar svg {
    width: 18px;
    height: 18px;
}

.sheet {
    flex: 1;
    min-height: 0;
    display: grid;
    grid-template-columns: 16px minmax(0, 1fr) 15px;
    grid-template-rows: 18px minmax(0, 1fr) 16px;
    border-left: 1px solid #888;
    background: #f0f0f0;
}

.corner {
    border: solid #777;
    border-width: 1px 1px 1px 0;
}

.ruler-x {
    grid-column: 2 / 4;
    width: 100%;
    height: 18px;
    border: solid #777;
    border-width: 1px 0 2px;
    background: #fff;
}

.ruler-y {
    grid-row: 2 / 4;
    width: 16px;
    height: 100%;
    border-right: 2px solid #888;
    background: #fff;
}

.ruler-x text,
.ruler-y text {
    font: 8px "Liberation Sans", "Noto Sans CJK SC", sans-serif;
}

.ruler-x .unit {
    font-size: 7px;
}

.ruler-x path,
.ruler-y path {
    stroke: #222;
    shape-rendering: crispEdges;
}

.ruler-x .now,
.ruler-y .now {
    stroke: #e02020;
}

.drawing {
    width: 100%;
    height: 100%;
    background: #fff;
    overflow: hidden;
}

.grid path {
    stroke: #c4c4c4;
    shape-rendering: crispEdges;
}

.axis {
    stroke: #111;
    shape-rendering: crispEdges;
}

.axis.heavy {
    stroke-width: 2;
}

.cut {
    fill: none;
    stroke: #2fdc98;
    stroke-width: 1;
}

.hole {
    stroke-width: 1.5;
}

.node {
    stroke: #06140e;
    stroke-width: 4;
}

.node-in {
    stroke: #b4ecd2;
    stroke-width: 2;
    stroke-dasharray: 2 1;
}

.travel {
    fill: none;
    stroke: #1414d8;
    stroke-width: 2;
}

.travel.head {
    fill: #fff;
}

.zero {
    font: bold 12px "Liberation Mono", monospace;
}

.mark {
    fill: none;
    stroke: #ee1c25;
    stroke-width: 3;
}

.note {
    font: 25px "Noto Sans CJK SC", sans-serif;
    fill: #ee1c25;
}

.hscroll {
    grid-column: 2 / 4;
    display: flex;
    justify-content: space-between;
    align-items: center;
    padding: 0 16px 0 1px;
}

.btn {
    display: grid;
    place-items: center;
    width: 14px;
    height: 13px;
    border: 1px solid #999;
    border-radius: 2px;
    background: linear-gradient(#f8f8f8, #d4d4d4);
}

.btn.grip {
    width: 22px;
    margin-left: 24px;
}

.btn.prev::before,
.btn.next::before {
    content: "";
    border: 2px solid transparent;
    border-right: 3px solid #333;
    border-left: 0;
}

.btn.next::before {
    border-right: 0;
    border-left: 3px solid #333;
}

.btn.grip::before,
.long::before {
    content: "";
    width: 7px;
    height: 6px;
    background: repeating-linear-gradient(90deg, #555 0 1px, transparent 1px 3px);
}

/* Layer list */
.right {
    position: relative;
    width: 261px;
    margin: 1px 0 3px 2px;
    flex: none;
    display: flex;
    flex-direction: column;
}

.layers {
    margin-top: 2px;
    height: 172px;
    display: grid;
    grid-template-columns: minmax(0, 1fr) 15px;
    grid-template-rows: 152px 14px;
    padding: 2px 2px 2px 1px;
    border: 1px solid #888;
    border-left-width: 2px;
}

.layer-view {
    overflow: hidden;
    background: #fff;
}

.layer-table,
.param-table {
    width: 100%;
    border-collapse: collapse;
    table-layout: fixed;
}

.layer-table th {
    width: 51px;
    height: 21px;
    padding: 0 0 0 5px;
    font-weight: normal;
    text-align: left;
    border-right: 1px solid #e4e4e4;
    background: linear-gradient(#fff, #f1f1f1);
}

.layer-table th:last-child {
    width: auto;
}

.layer-table td {
    height: 14px;
    padding: 0;
    text-align: center;
    line-height: 13px;
    color: #555;
    border-right: 1px solid #ececec;
}

.layer-table td,
.layer-table th:first-child {
    font-family: "Liberation Mono", "Noto Sans CJK SC", monospace;
    font-size: 10px;
}

.layer-table td:nth-child(n + 4) {
    font-size: 11px;
}

.layer-table td:last-child {
    padding-left: 15px;
}

.layer-table td:first-child div {
    display: flex;
    align-items: center;
    gap: 12px;
}

.layer-table td:first-child svg {
    width: 11px;
    height: 10px;
}

.layer-table .swatch {
    border: 1px solid #fff;
    border-width: 0 1px 1px;
    background-clip: padding-box;
}

.layer-table .current td {
    background-color: #3399ff;
    color: #fff;
}

.layer-table .near td {
    background-color: #f0f0f0;
    color: #000;
}

.hbar {
    display: flex;
    align-items: center;
    justify-content: space-between;
    padding: 0 6px;
}

.prev:not(.btn) {
    border-right: 4px solid #222;
    border-left: 0;
}

.next:not(.btn) {
    border-left: 4px solid #222;
    border-right: 0;
}

.long {
    flex: 1;
    height: 13px;
    margin: 0 20px 0 6px;
    display: grid;
    place-items: center;
    border: 1px solid #999;
    border-radius: 2px;
    background: linear-gradient(#f8f8f8, #d4d4d4);
}

/* Parameters */
.param-panel {
    flex: 1;
    min-height: 0;
    margin-top: 7px;
    display: flex;
    flex-direction: column;
    border: 1px solid #888;
    border-right: 0;
    border-left-width: 2px;
    border-bottom-width: 2px;
    padding-left: 1px;
}

.params {
    height: 423px;
    border: 1px solid #999;
    background: #fff;
}

.param-table {
    height: 141px;
}

.c-margin {
    width: 9px;
}

.c-name {
    width: 114px;
}

.param-table td,
.param-table th {
    padding: 0;
    font-weight: normal;
    text-align: left;
    line-height: 14px;
    font-family: "Noto Sans CJK SC", sans-serif;
    border-bottom: 1px solid #e6e6e6;
}

.param-table tr > :first-child {
    background: #d4d0c8;
    border-color: #d4d0c8;
}

.param-table td:nth-child(2) {
    padding-left: 11px;
    border-right: 1px solid #e6e6e6;
}

.param-table td:last-child {
    padding-left: 3px;
    font: 9px/14px "Liberation Mono", monospace;
}

.param-table td.word {
    font: 11px/14px "Noto Sans CJK SC", sans-serif;
}

.param-table small {
    font: 9px/14px "Liberation Mono", monospace;
}

.param-table .head th:last-child {
    background: #f0f0f0;
}

.minus {
    display: inline-block;
    width: 8px;
    height: 8px;
    margin-left: -7px;
    border: 1px solid #354;
    background: linear-gradient(#111, #111) center / 4px 1px no-repeat #dfe6d8;
}

.param-table td.channels {
    padding: 0;
}

.channels div {
    display: flex;
    gap: 2px;
    padding-left: 2px;
    overflow: hidden;
}

.channels label {
    flex: none;
    display: flex;
    align-items: center;
    gap: 3px;
    width: 32px;
    height: 15px;
    border: 1px solid #666;
    padding-left: 1px;
    color: #777;
    font-size: 10px;
}

.channels input[type="checkbox"] {
    border-color: #bbb;
}

.channels input[type="checkbox"]::before {
    border-color: #aaa;
}

.param-empty {
    flex: 1;
    margin: 6px 2px 0;
    border: 1px solid #e4e4e4;
    border-radius: 3px;
}

.param-name {
    display: flex;
    align-items: center;
    justify-content: space-between;
    height: 20px;
    margin: 4px 2px 0;
}

.param-name input {
    width: 172px;
    height: 18px;
    padding-left: 2px;
    border: 1px solid #aaa;
    border-radius: 2px;
    background: #f0f0f0;
    color: #777;
    font: 9px "Liberation Mono", monospace;
}

.side-meter {
    position: absolute;
    right: 0;
    top: 377px;
    width: 7px;
    height: 51px;
    border-radius: 4px 0 0 4px;
    background: repeating-linear-gradient(transparent 0 2px, #3336 2px 3px), linear-gradient(#444 50%, #28b463 50%);
}

/* Bottom bars */
.alignbar {
    height: 28px;
    flex: none;
    display: flex;
    align-items: center;
    margin-left: 3px;
    border-top: 1px solid #fafafa;
    border-bottom: 1px solid #999;
    border-left: 1px solid #ccc;
}

.alignbar button {
    width: 26px;
}

.alignbar .gap {
    margin-left: 12px;
}

.alignbar .nudge {
    margin-left: 4px;
}

.alignbar .nudge button {
    width: 27px;
}

.alignbar .nudge .big {
    width: 34px;
}

.alignbar .nudge svg {
    width: 20px;
}

.statusbar {
    height: 15px;
    flex: none;
    display: flex;
    background: #f0edeb;
    white-space: nowrap;
    line-height: 16px;
}

.statusbar span {
    flex: none;
    width: 34px;
    padding-left: 4px;
    border-left: 1px solid #ddd;
}

.statusbar .ready {
    flex: 1;
    padding-left: 3px;
    border: 0;
}

.statusbar .pos {
    width: 144px;
}

.statusbar .db {
    width: 73px;
}

.statusbar .cut-off {
    width: 28px;
    overflow: hidden;
}

.statusbar .height {
    width: 115px;
}
```
FILE: script.js
```js
// Ruler scale: pixels per millimetre and where 0 sits inside the drawing
const SCALE = 1.758;
const ORIGIN_X = 872;
const ORIGIN_Y = 108;
const NS = 'http://www.w3.org/2000/svg';

function add(parent, name, attrs, text) {
    const el = document.createElementNS(NS, name);
    for (const key in attrs) el.setAttribute(key, attrs[key]);
    if (text) el.textContent = text;
    parent.appendChild(el);
    return el;
}

// Grid, one line every 10 mm
const grid = document.getElementById('grid');
for (let mm = -800; mm <= 400; mm += 10) {
    const x = Math.round(ORIGIN_X + mm * SCALE) + 0.5;
    const y = Math.round(ORIGIN_Y - mm * SCALE) + 0.5;
    add(grid, 'path', { d: `M${x} 0v3000` });
    add(grid, 'path', { d: `M0 ${y}h4000` });
}

// Rulers, one tick every 5 mm and a label every 50 mm
const rulerX = document.getElementById('rulerX');
const rulerY = document.getElementById('rulerY');
for (let mm = -495; mm <= 40; mm += 5) {
    const x = Math.round(ORIGIN_X + mm * SCALE) + 0.5;
    const len = mm % 25 === 0 ? 6 : 3;
    add(rulerX, 'path', { d: `M${x} 15v-${len}` });
    if (mm % 50 === 0) {
        add(rulerX, 'text', { x: x, y: 8, 'text-anchor': 'middle' }, String(mm));
    }
}
add(rulerX, 'text', { x: 933, y: 8, class: 'unit' }, '毫米');
add(rulerX, 'path', { d: 'M293.500 0v15', class: 'now' });

for (let mm = 60; mm >= -355; mm -= 5) {
    const y = Math.round(ORIGIN_Y - mm * SCALE) + 0.5;
    const len = mm % 25 === 0 ? 6 : 3;
    add(rulerY, 'path', { d: `M13 ${y}h-${len}` });
    if (mm % 50 === 0) {
        add(rulerY, 'text', { transform: `translate(7 ${y + 4}) rotate(-90)` }, String(mm));
    }
}
add(rulerY, 'path', { d: 'M0 720.500h14', class: 'now' });

// Small drill holes
const holes = [
    [753, 242], [753, 418], [744, 330], [929, 263], [929, 397],
    [1105, 242], [1105, 418], [1105, 330], [1114, 330]
];
for (const x of [793, 845, 1012, 1065]) {
    for (const y of [243, 285, 375, 417]) holes.push([x, y]);
}
for (const [cx, cy] of holes) {
    add(document.getElementById('holes'), 'circle', { cx, cy, r: 2.5 });
}

// Layer list
const layers = [
    [1, '#00ff7f', '是'], [2, '#0000ff', '是'], [3, '#ff0000', '否'], [4, '#000080', '是'],
    [5, '#9400b8', '否'], [6, '#800000', '是'], [7, '#008080', '是'], [8, '#808000', '是'],
    [9, '#808080', '是'], [10, '#707070', '是']
];
document.getElementById('layerRows').innerHTML = layers.map(([id, color, cut]) => {
    const mark = cut === '是' ? 'M1 4l3 4 6-7' : 'M1 1l9 8M10 1L1 9';
    const cls = id === 1 ? 'current' : id === 2 ? 'near' : '';
    return `<tr class="${cls}">
        <td><div><svg viewBox="0 0 11 10"><path d="${mark}" fill="none" stroke="#d81e2c" stroke-width="1.500"/></svg>${id}</div></td>
        <td class="swatch" style="background-color:${color}"></td>
        <td>${id}</td><td>${cut}</td><td>是</td></tr>`;
}).join('');
```
